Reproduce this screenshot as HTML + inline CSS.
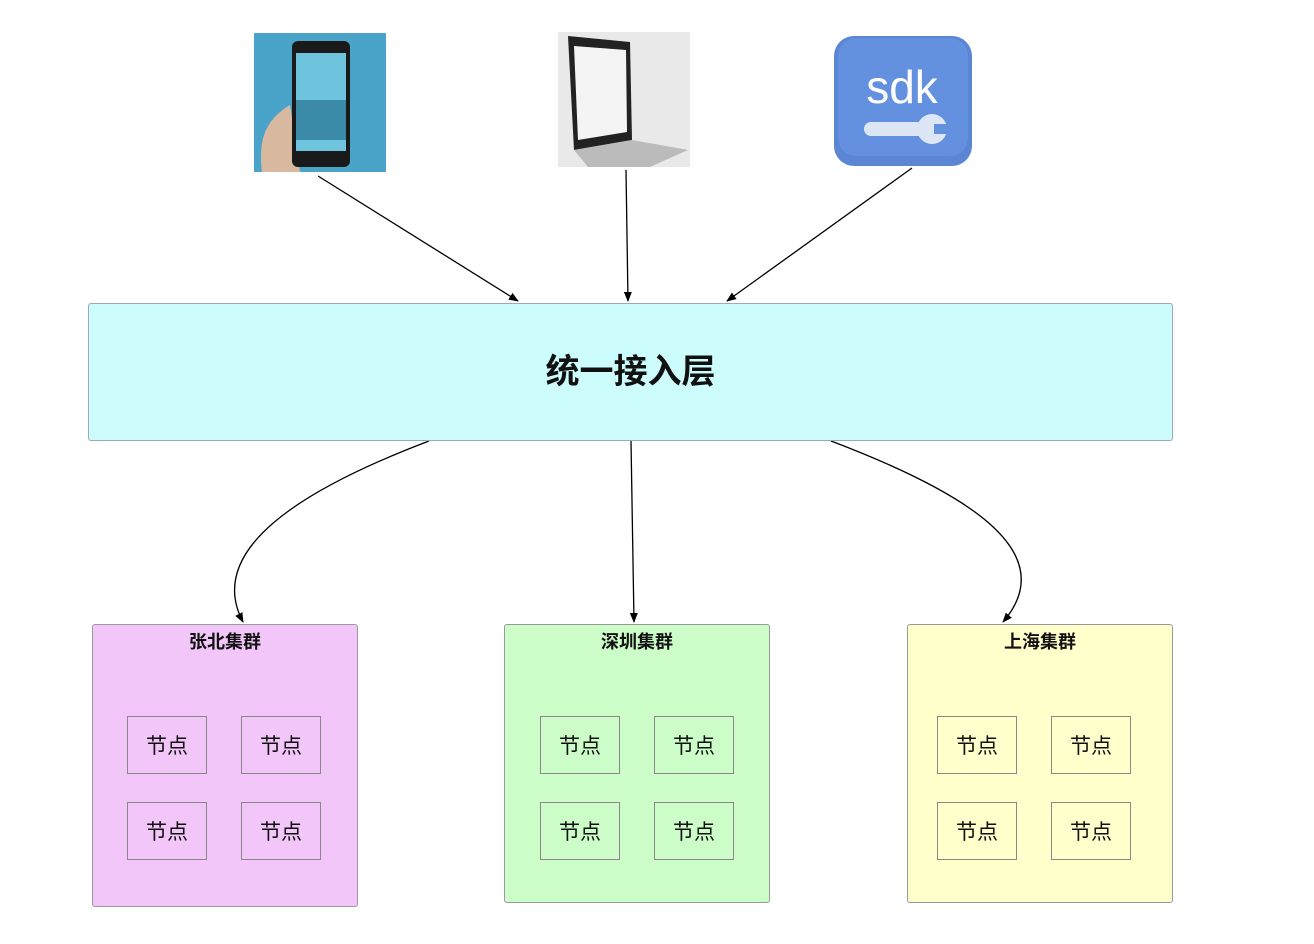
<!DOCTYPE html>
<html><head><meta charset="utf-8"><style>
body{margin:0;width:1314px;height:944px;background:#fff;position:relative;overflow:hidden;font-family:"Liberation Sans","Noto Sans CJK SC",sans-serif}
.a{position:absolute;box-sizing:border-box}
.cl{border:1px solid #999;border-radius:3px}
.t{position:absolute;left:0;right:0;top:3px;text-align:center;font-weight:bold;font-size:18px;color:#111}
.n{position:absolute;box-sizing:border-box;width:80px;height:58px;border:1px solid #888;font-size:21px;line-height:59px;text-align:center;color:#111}
</style></head><body>
<svg class="a" style="left:0;top:0" width="1314" height="944">
<defs><marker id="m" markerWidth="10" markerHeight="10" refX="9" refY="5" orient="auto" markerUnits="userSpaceOnUse"><path d="M0,1 L10,5 L0,9 z" fill="#000"/></marker></defs>
<g stroke="#000" stroke-width="1.3" fill="none" marker-end="url(#m)">
<path d="M318,176 L518,301"/>
<path d="M626,170 L628,301"/>
<path d="M912,168 L727,301"/>
<path d="M429,441 C300,490 205,550 243,622"/>
<path d="M631,441 L634,622"/>
<path d="M831,441 C960,490 1065,550 1003,622"/>
</g>
<rect x="254" y="33" width="132" height="139" fill="#4aa3c8"/>
<path d="M262,172 C258,140 265,120 290,105 L300,172Z" fill="#d8b9a0"/>
<rect x="292" y="41" width="58" height="126" rx="6" fill="#1a1a1a"/>
<rect x="296" y="53" width="50" height="98" fill="#6fc4dd"/>
<rect x="296" y="100" width="50" height="40" fill="#3a8aa8"/>
<rect x="558" y="32" width="132" height="135" fill="#e9e9e9"/>
<path d="M568,36 L630,42 L632,140 L574,150Z" fill="#222"/>
<path d="M574,46 L626,50 L627,132 L578,140Z" fill="#f4f4f4"/>
<path d="M574,150 L632,140 L688,150 L650,167 L588,167Z" fill="#bbb"/>
<rect x="834" y="36" width="138" height="130" rx="20" fill="#5b86d4"/>
<rect x="838" y="38" width="130" height="118" rx="18" fill="#6390df"/>
<text x="902" y="103" font-family="Liberation Sans" font-size="46" fill="#fff" text-anchor="middle">sdk</text>
<rect x="864" y="122" width="60" height="14" rx="7" fill="#dde6f4"/>
<circle cx="932" cy="129" r="15" fill="#dde6f4"/>
<rect x="934" y="124" width="16" height="10" fill="#6390df"/>
</svg>
<div class="a" style="left:88px;top:303px;width:1085px;height:138px;background:#ccfcfc;border:1px solid #9ab;border-radius:3px;text-align:center;line-height:136px;font-size:34px;font-weight:bold;color:#111">统一接入层</div>

<div class="a cl" style="left:92px;top:624px;width:266px;height:283px;background:#f2c6f9"><div class="t">张北集群</div></div>
<div class="a cl" style="left:504px;top:624px;width:266px;height:279px;background:#ccfcc8"><div class="t">深圳集群</div></div>
<div class="a cl" style="left:907px;top:624px;width:266px;height:279px;background:#ffffcc"><div class="t">上海集群</div></div>

<div class="n" style="left:127px;top:716px">节点</div><div class="n" style="left:241px;top:716px">节点</div>
<div class="n" style="left:127px;top:802px">节点</div><div class="n" style="left:241px;top:802px">节点</div>
<div class="n" style="left:540px;top:716px">节点</div><div class="n" style="left:654px;top:716px">节点</div>
<div class="n" style="left:540px;top:802px">节点</div><div class="n" style="left:654px;top:802px">节点</div>
<div class="n" style="left:937px;top:716px">节点</div><div class="n" style="left:1051px;top:716px">节点</div>
<div class="n" style="left:937px;top:802px">节点</div><div class="n" style="left:1051px;top:802px">节点</div>
</body></html>
